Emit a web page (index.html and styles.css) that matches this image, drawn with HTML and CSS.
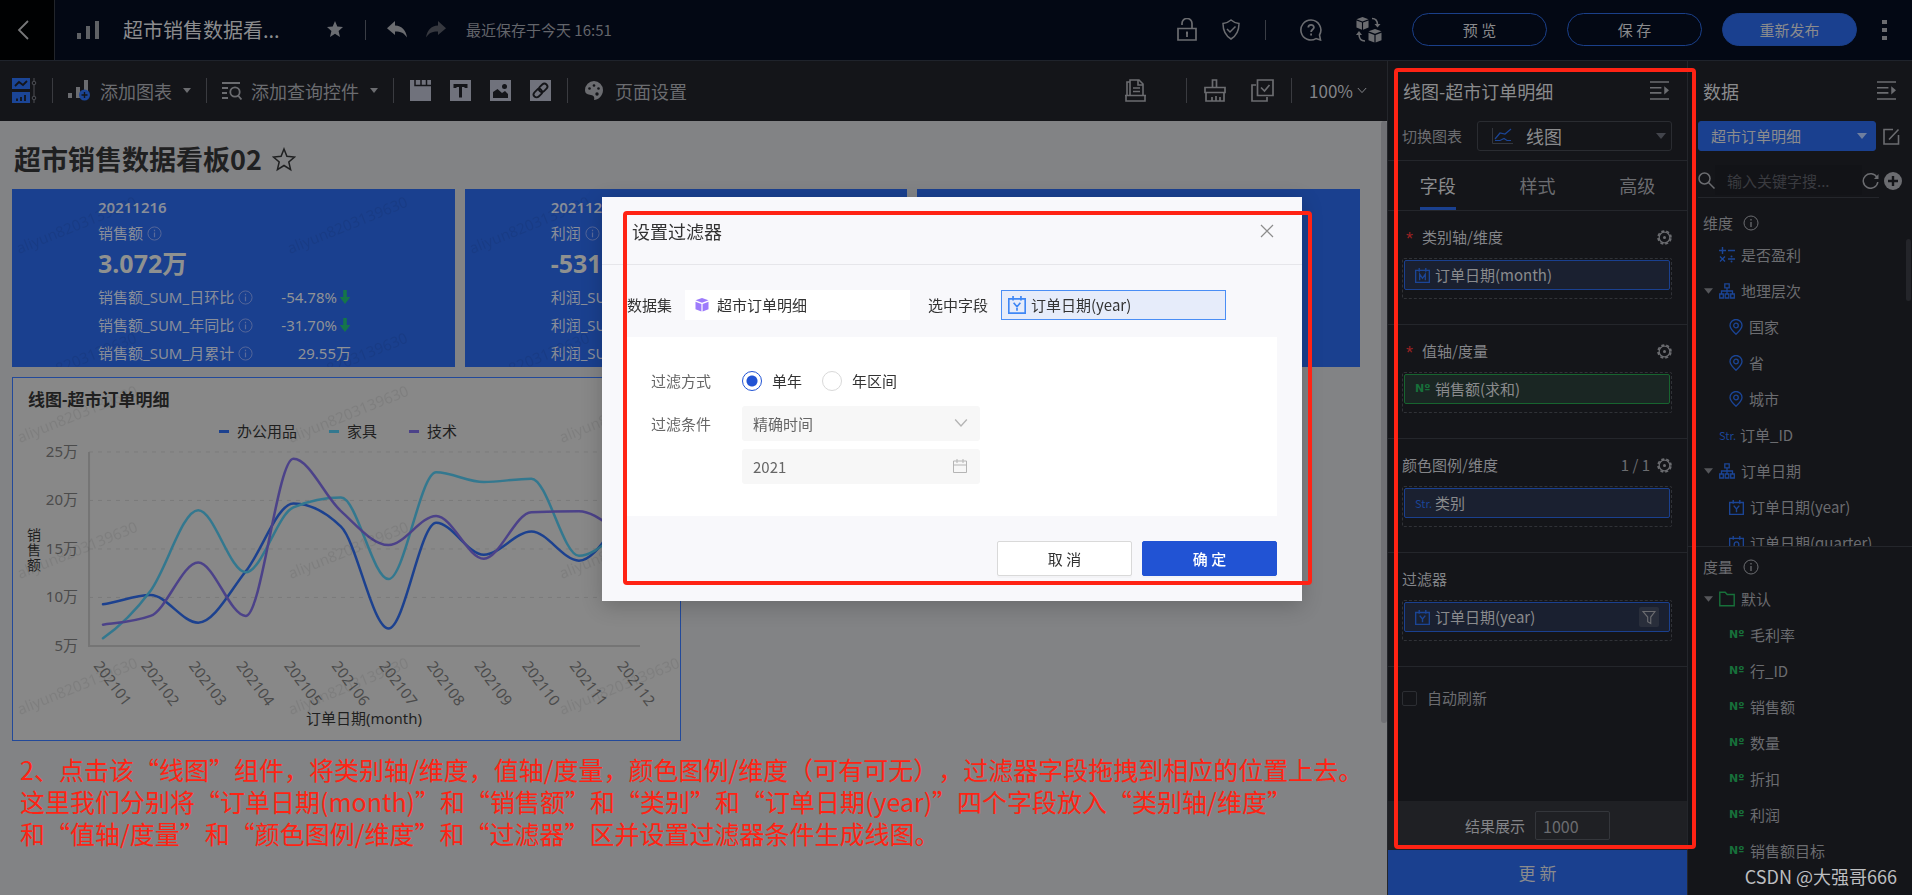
FILE: index.html
```html
<!DOCTYPE html>
<html lang="zh-CN">
<head>
<meta charset="utf-8">
<title>超市销售数据看板02</title>
<link rel="stylesheet" href="styles.css">
</head>
<body>
<svg class="sprite" aria-hidden="true">
  <symbol id="i-info" viewBox="0 0 16 16"><circle cx="8" cy="8" r="7" fill="none" stroke="currentColor"/><path d="M8 7v5M8 4v1.500" stroke="currentColor" stroke-width="1.300" fill="none"/></symbol>
  <symbol id="i-down" viewBox="0 0 12 18"><path d="M4 1h4v8h4l-6 8-6-8h4z" fill="currentColor"/></symbol>
  <symbol id="i-caret" viewBox="0 0 10 6"><path d="M0 0h10L5 6z" fill="currentColor"/></symbol>
  <symbol id="i-chev" viewBox="0 0 12 8"><path d="M1 1l5 5.500L11 1" fill="none" stroke="currentColor" stroke-width="1.200"/></symbol>
  <symbol id="i-collapse" viewBox="0 0 20 20"><path d="M0 1h20M0 7h12M0 12.500h12M0 19h20" stroke="currentColor" stroke-width="1.600" fill="none"/><path d="M15 5.500l5 4.300-5 4.300z" fill="currentColor"/></symbol>
  <symbol id="i-gear" viewBox="0 0 16 16"><circle cx="8" cy="8" r="5.700" fill="none" stroke="currentColor" stroke-width="1.400"/><circle cx="8" cy="8" r="6.900" fill="none" stroke="currentColor" stroke-width="1.800" stroke-dasharray="3.200 2.220" stroke-dashoffset="-1.100"/><circle cx="8" cy="8" r="1.600" fill="currentColor"/></symbol>
  <symbol id="i-year" viewBox="0 0 16 16"><path d="M.7 2.600h14.600v12.700H.7zM4.500 0v4M11.500 0v4M5 6l3 3.500L11 6M8 9.500V13" fill="none" stroke="currentColor" stroke-width="1.500"/></symbol>
  <symbol id="i-month" viewBox="0 0 16 16"><path d="M.7 2.600h14.600v12.700H.7zM4.500 0v4M11.500 0v4M5 13V6.500L8 11l3-4.500V13" fill="none" stroke="currentColor" stroke-width="1.400"/></symbol>
  <symbol id="i-quarter" viewBox="0 0 16 16"><path d="M.7 2.600h14.600v12.700H.7zM4.500 0v4M11.500 0v4M8.500 11l2.500 2.500" fill="none" stroke="currentColor" stroke-width="1.400"/><ellipse cx="8" cy="9.500" rx="2.500" ry="3.200" fill="none" stroke="currentColor" stroke-width="1.400"/></symbol>
  <symbol id="i-calc" viewBox="0 0 16 16"><path d="M0 3.500h7M3.500 0v7M9 3.500h7M1 9.500l5 5M6 9.500l-5 5M9 12h7" stroke="currentColor" stroke-width="1.400" fill="none"/><circle cx="12.500" cy="9.500" r="1" fill="currentColor"/><circle cx="12.500" cy="14.500" r="1" fill="currentColor"/></symbol>
  <symbol id="i-tree" viewBox="0 0 16 16"><path d="M5.800.8h4.400v4H5.800zM.7 11h3.600v4H.7zM6.200 11h3.600v4H6.200zM11.700 11h3.600v4h-3.600zM8 5v6M2.500 11V8h11v3" fill="none" stroke="currentColor" stroke-width="1.300"/></symbol>
  <symbol id="i-pin" viewBox="0 0 14 16"><path d="M7 15.200C3.500 12 1 9.500 1 6.500a6 6 0 0 1 12 0c0 3-2.500 5.500-6 8.700z" fill="none" stroke="currentColor" stroke-width="1.300"/><circle cx="7" cy="6.500" r="2.300" fill="none" stroke="currentColor" stroke-width="1.300"/></symbol>
  <symbol id="i-folder" viewBox="0 0 16 16"><path d="M.8 1.200h5.400l2 2.300h7v11.300H.8z" fill="none" stroke="currentColor" stroke-width="1.400"/></symbol>
  <symbol id="i-funnel" viewBox="0 0 16 16"><path d="M1.200 1.200h13.600L10 7.500v7.300l-3.500-2V7.500z" fill="none" stroke="currentColor" stroke-width="1.300"/></symbol>
  <symbol id="i-cal" viewBox="0 0 16 16"><path d="M1.500 3h13v11.500h-13zM1.500 7h13M5 1v4M11 1v4" fill="none" stroke="currentColor"/></symbol>
  <symbol id="i-cube" viewBox="0 0 14 14"><path d="M7 0l6.500 2.300L7 4.800.5 2.300z" fill="currentColor"/><path d="M.5 3.800l5.900 2.200v7.600L.5 11.200zM13.500 3.800L7.600 6v7.600l5.900-2.400z" fill="currentColor"/></symbol>
  <pattern id="watermark" width="271" height="136" patternUnits="userSpaceOnUse"><text class="wm-text" x="7" y="65" transform="rotate(-22 7 65)">aliyun8203139630</text></pattern>
</svg>

<header class="topbar">
  <button class="back" aria-label="返回"><svg width="12" height="20" viewBox="0 0 12 20"><path d="M11 1L2 10l9 9" fill="none" stroke="currentColor" stroke-width="1.800"/></svg></button>
  <svg class="doc-icon" width="22" height="18" viewBox="0 0 22 18"><path d="M0 12h4v6H0zM9 5h4v13H9zM18 0h4v18h-4z" fill="currentColor"/></svg>
  <h1 class="doc-title">超市销售数据看...</h1>
  <button class="icon-btn star" aria-label="收藏"><svg width="16" height="17" viewBox="0 0 16 17"><path d="M8 0l2.300 5.600 5.700.4-4.400 3.900L13 16l-5-3.300L3 16l1.400-6.100L0 6l5.700-.4z" fill="currentColor"/></svg></button>
  <span class="vline"></span>
  <button class="icon-btn undo" aria-label="撤销"><svg width="20" height="17" viewBox="0 0 20 17"><path d="M8 0v4.500c7 0 11 5 12 12-3-4.500-6-6-12-6V14L0 7.300z" fill="currentColor"/></svg></button>
  <button class="icon-btn redo" aria-label="重做"><svg width="20" height="17" viewBox="0 0 20 17"><path d="M12 0v4.500c-7 0-11 5-12 12 3-4.500 6-6 12-6V14l8-6.700z" fill="currentColor"/></svg></button>
  <span class="saved">最近保存于今天 16:51</span>
  <div class="top-right">
    <div class="top-icons">
      <button class="icon-btn" aria-label="解锁"><svg width="20" height="23" viewBox="0 0 20 23"><path d="M1 10.500h18V22H1zM5 7V5.500a5 5 0 0 1 10 0v5" fill="none" stroke="currentColor" stroke-width="1.700"/><path d="M10 13.500v5.500M9 15h2" stroke="currentColor" stroke-width="1.800"/></svg></button>
      <button class="icon-btn" aria-label="权限"><svg width="18" height="21" viewBox="0 0 18 21"><path d="M9 1c2.500 2.200 4.800 3.200 8 3.500 0 7.500-2.200 12-8 15.500C3.200 16.500 1 12 1 4.500 4.200 4.200 6.500 3.200 9 1z" fill="none" stroke="currentColor" stroke-width="1.500"/><path d="M5 10l3 3 5.500-5.500" fill="none" stroke="currentColor" stroke-width="1.500"/></svg></button>
      <span class="vline"></span>
      <button class="icon-btn help" aria-label="帮助"><svg width="22" height="22" viewBox="0 0 22 22"><path d="M11 1a10 10 0 1 0 5 18.600l4.500 1.400-1-5A10 10 0 0 0 11 1z" fill="none" stroke="currentColor" stroke-width="1.600"/><path d="M8.300 8.500c0-3.500 5.600-3.500 5.600 0 0 2-2.800 2-2.800 4.500M11.100 14.500v2" fill="none" stroke="currentColor" stroke-width="1.800"/></svg></button>
      <button class="icon-btn" aria-label="转换"><svg width="26" height="26" viewBox="0 0 26 26"><use href="#i-cube" width="13" height="13"/><use href="#i-cube" x="12" y="12" width="14" height="14"/><path d="M16 1.500c3 0 5.500 2 5.500 6.500M9 24c-4 0-6-3-6-7" fill="none" stroke="currentColor" stroke-width="1.600"/><path d="M18.500 7h6l-3 3.500zM0 18h6l-3-4z" fill="currentColor"/></svg></button>
    </div>
    <button class="pill">预 览</button>
    <button class="pill">保 存</button>
    <button class="pill primary">重新发布</button>
    <button class="icon-btn more" aria-label="更多"><svg width="5" height="20" viewBox="0 0 5 20"><path d="M0 0h5v4H0zM0 8h5v4H0zM0 16h5v4H0z" fill="currentColor"/></svg></button>
  </div>
</header>

<main class="workspace">
  <section class="editor">
    <div class="toolbar">
      <button class="icon-btn" aria-label="组件"><svg width="25" height="25" viewBox="0 0 25 25"><path d="M0 0h18v11H0zM0 14h18v11H0z" fill="#1b4596"/><path d="M3 8l4-4 4 3 4-4M5 23v-2.500M9 23v-4M13 23v-6" fill="none" stroke="#141519" stroke-width="1.800"/><path d="M22 0v3M22 7v11M22 22v3" stroke="#4d4f55"/><circle cx="22" cy="5" r="1.800" fill="none" stroke="#4d4f55"/><circle cx="22" cy="20" r="1.800" fill="none" stroke="#4d4f55"/></svg></button>
      <span class="vline tall"></span>
      <button class="tool"><svg width="23" height="21" viewBox="0 0 23 21"><path d="M0 13h4v5H0zM8 7h4v11H8zM16 0h4v12h-4z" fill="#6b6c70"/><circle cx="16.500" cy="15" r="5.500" fill="#1b4596"/><path d="M16.500 12v6M13.500 15h6" stroke="#141519" stroke-width="1.400"/></svg><span>添加图表</span><svg class="drop-arrow" width="8" height="5"><use href="#i-caret"/></svg></button>
      <span class="vline tall"></span>
      <button class="tool"><svg width="20" height="18" viewBox="0 0 20 18"><path d="M0 1h18M0 6h6M0 11h5M0 16h6" stroke="currentColor" stroke-width="1.800"/><circle cx="13" cy="10" r="4.700" fill="none" stroke="currentColor" stroke-width="1.800"/><path d="M16 13.500l3.500 4" stroke="currentColor" stroke-width="1.800"/></svg><span>添加查询控件</span><svg class="drop-arrow" width="8" height="5"><use href="#i-caret"/></svg></button>
      <span class="vline tall"></span>
      <div class="square-tools">
        <button class="icon-btn" aria-label="标签页"><svg width="21" height="21" viewBox="0 0 21 21"><path d="M0 0h21v21H0z" fill="currentColor"/><path d="M5 0v5.500h16M11 0v5.500M16.500 0v5.500" fill="none" stroke="#141519" stroke-width="1.500"/></svg></button>
        <button class="icon-btn" aria-label="文本"><svg width="21" height="21" viewBox="0 0 21 21"><path d="M0 0h21v21H0z" fill="currentColor"/><path d="M5 8V5.500h11V8M10.500 5v12.500" fill="none" stroke="#141519" stroke-width="3"/></svg></button>
        <button class="icon-btn" aria-label="图片"><svg width="21" height="21" viewBox="0 0 21 21"><path d="M0 0h21v21H0z" fill="currentColor"/><path d="M3 18v-6l4.500-3 4.500 4 3-2 3 3v4z" fill="#141519"/><circle cx="14.500" cy="6.500" r="2.500" fill="#141519"/></svg></button>
        <button class="icon-btn" aria-label="链接"><svg width="21" height="21" viewBox="0 0 21 21"><path d="M0 0h21v21H0z" fill="currentColor"/><g fill="none" stroke="#141519" stroke-width="1.800" transform="rotate(-45 10.500 10.500)"><rect x="2" y="7.500" width="9.500" height="6" rx="3"/><rect x="9.500" y="7.500" width="9.500" height="6" rx="3"/></g></svg></button>
      </div>
      <span class="vline tall"></span>
      <button class="tool page-set"><svg width="18" height="19" viewBox="0 0 18 19"><path d="M9 0a9 9 0 0 1 9 9c0 6-5 10-9 10 1-3-.5-4.500-3-5-3-.4-6-1-6-5a9 9 0 0 1 9-9z" fill="currentColor"/><g fill="#141519"><circle cx="4.500" cy="7.500" r="1.300"/><circle cx="9" cy="4.500" r="1.300"/><circle cx="13.500" cy="7.500" r="1.300"/><circle cx="12" cy="13" r="1.700"/></g></svg><span>页面设置</span></button>
      <div class="tool-right">
        <button class="icon-btn" aria-label="报告"><svg width="23" height="23" viewBox="0 0 23 23"><path d="M3 16V3h3V1h9l4 4v11M6 3v13M14 1v5h5M9 9h7M9 12.500h7M1 16.500h21M2 17v5h19v-5" fill="none" stroke="currentColor" stroke-width="1.600"/></svg></button>
        <span class="vline tall"></span>
        <button class="icon-btn" aria-label="格式刷"><svg width="22" height="23" viewBox="0 0 22 23"><path d="M8.500 8V1h4v7M1 8.500h20v5H1zM2 13.500V22h18v-8.500M8 22v-4M12 22v-5M16 22v-4" fill="none" stroke="currentColor" stroke-width="1.700"/></svg></button>
        <button class="icon-btn" aria-label="批量选择"><svg width="23" height="23" viewBox="0 0 23 23"><path d="M6.500 1H22v15.500H6.500zM5 6H1v16h15v-4" fill="none" stroke="currentColor" stroke-width="1.700"/><path d="M10 8.500l3.500 3.500 5-6" fill="none" stroke="currentColor" stroke-width="1.700"/></svg></button>
        <span class="vline tall"></span>
        <button class="zoom">100%<svg width="10" height="7"><use href="#i-chev"/></svg></button>
      </div>
    </div>

    <div class="canvas">
      <div class="board-title"><h2>超市销售数据看板02</h2><svg width="24" height="25" viewBox="0 0 24 25"><path d="M12 2l2.900 7.300 7.600.7-5.700 5 1.800 7.700L12 18.500l-6.600 4.200L7.200 15 1.500 10l7.600-.7z" fill="none" stroke="currentColor" stroke-width="1.500"/></svg></div>
      <div class="board">
        <article class="kpi">
          <div class="kpi-date">20211216</div>
          <div class="kpi-name">销售额<svg width="15" height="15"><use href="#i-info"/></svg></div>
          <div class="kpi-value">3.072万</div>
          <div class="kpi-row"><span>销售额_SUM_日环比<svg width="15" height="15"><use href="#i-info"/></svg></span><span>-54.78%<svg class="drop" width="12" height="16"><use href="#i-down"/></svg></span></div>
          <div class="kpi-row"><span>销售额_SUM_年同比<svg width="15" height="15"><use href="#i-info"/></svg></span><span>-31.70%<svg class="drop" width="12" height="16"><use href="#i-down"/></svg></span></div>
          <div class="kpi-row last"><span>销售额_SUM_月累计<svg width="15" height="15"><use href="#i-info"/></svg></span><span>29.55万</span></div>
          <svg class="wm" aria-hidden="true"><rect width="100%" height="100%" fill="url(#watermark)"/></svg>
        </article>
        <article class="kpi">
          <div class="kpi-date">20211216</div>
          <div class="kpi-name">利润<svg width="15" height="15"><use href="#i-info"/></svg></div>
          <div class="kpi-value">-531</div>
          <div class="kpi-row"><span>利润_SUM_日环比</span></div>
          <div class="kpi-row"><span>利润_SUM_年同比</span></div>
          <div class="kpi-row last"><span>利润_SUM_月累计</span></div>
          <svg class="wm" aria-hidden="true"><rect width="100%" height="100%" fill="url(#watermark)"/></svg>
        </article>
        <article class="kpi"></article>
        <article class="chart-card">
          <h3>线图-超市订单明细</h3>
          <svg id="chart" class="chart" viewBox="0 0 667 328" role="img" aria-label="线图-超市订单明细"></svg>
          <svg class="wm" aria-hidden="true"><rect width="100%" height="100%" fill="url(#watermark)"/></svg>
        </article>
      </div>
      <p class="note">2、点击该“线图”组件，将类别轴/维度，值轴/度量，颜色图例/维度（可有可无），过滤器字段拖拽到相应的位置上去。<br>这里我们分别将“订单日期(month)”和“销售额”和“类别”和“订单日期(year)”四个字段放入“类别轴/维度”<br>和“值轴/度量”和“颜色图例/维度”和“过滤器”区并设置过滤器条件生成线图。</p>
      <span class="canvas-scroll"></span>
    </div>
  </section>

  <aside class="panel">
    <div class="panel-head"><h2>线图-超市订单明细</h2><button class="icon-btn" aria-label="收起"><svg width="19" height="19"><use href="#i-collapse"/></svg></button></div>
    <div class="switch">
      <label for="chart-type">切换图表</label>
      <div class="select type-select"><svg class="lead" width="21" height="16" viewBox="0 0 21 16"><path d="M.5 0v15.500H21" fill="none" stroke="#33363d"/><path d="M3 11l5-6 5 1 6-5M3 12.500h5l4-2 3 2h4" fill="none" stroke="#1b4596" stroke-width="1.200"/></svg><select id="chart-type"><option>线图</option></select><svg class="arrow" width="10" height="6"><use href="#i-caret"/></svg></div>
    </div>
    <nav class="tabs"><button class="active">字段</button><button>样式</button><button>高级</button></nav>
    <section class="field">
      <div class="field-head"><i class="req">*</i><span>类别轴/维度</span><svg class="gear" width="15" height="15"><use href="#i-gear"/></svg></div>
      <div class="dropzone"><div class="chip"><svg width="15" height="15"><use href="#i-month"/></svg>订单日期(month)</div></div>
    </section>
    <section class="field">
      <div class="field-head"><i class="req">*</i><span>值轴/度量</span><svg class="gear" width="15" height="15"><use href="#i-gear"/></svg></div>
      <div class="dropzone"><div class="chip green"><b class="tag num">Nº</b>销售额(求和)</div></div>
    </section>
    <section class="field">
      <div class="field-head"><span>颜色图例/维度</span><em>1 / 1</em><svg class="gear" width="15" height="15"><use href="#i-gear"/></svg></div>
      <div class="dropzone"><div class="chip"><b class="tag">Str.</b>类别</div></div>
    </section>
    <section class="field">
      <div class="field-head"><span>过滤器</span></div>
      <div class="dropzone"><div class="chip"><svg width="15" height="15"><use href="#i-year"/></svg>订单日期(year)<button class="filter" aria-label="过滤"><svg width="14" height="15"><use href="#i-funnel"/></svg></button></div></div>
    </section>
    <label class="auto"><input type="checkbox">自动刷新</label>
    <div class="limit"><label for="limit">结果展示</label><input id="limit" type="text" value="1000"></div>
    <button class="update">更 新</button>
    <span class="mark mark-panel"></span>
  </aside>

  <aside class="data">
    <div class="panel-head"><h2>数据</h2><button class="icon-btn" aria-label="收起"><svg width="19" height="19"><use href="#i-collapse"/></svg></button></div>
    <div class="dataset">
      <div class="select blue"><select aria-label="数据集"><option>超市订单明细</option></select><svg class="arrow" width="10" height="6"><use href="#i-caret"/></svg></div>
      <button class="icon-btn" aria-label="编辑"><svg width="17" height="17" viewBox="0 0 17 17"><path d="M10 1.500H1v14.500h14.500V7M6 11.500L15.500 1.500" fill="none" stroke="currentColor" stroke-width="1.600"/></svg></button>
    </div>
    <div class="search-row">
      <div class="search"><svg width="17" height="17" viewBox="0 0 17 17"><circle cx="6.500" cy="6.500" r="5.500" fill="none" stroke="currentColor" stroke-width="1.500"/><path d="M10.500 10.500l6 6" stroke="currentColor" stroke-width="1.500"/></svg><input type="text" placeholder="输入关键字搜..." aria-label="搜索"><svg width="17" height="17" viewBox="0 0 17 17"><path d="M15 5.500A7.300 7.300 0 1 0 15.800 10" fill="none" stroke="currentColor" stroke-width="1.500"/><path d="M16.500 2v5h-4.500z" fill="currentColor"/></svg></div>
      <button class="icon-btn" aria-label="新增"><svg width="18" height="18" viewBox="0 0 18 18"><circle cx="9" cy="9" r="9" fill="currentColor"/><path d="M9 4v10M4 9h10" stroke="#141519" stroke-width="2.400"/></svg></button>
    </div>
    <section class="group dims">
      <h3>维度<svg width="16" height="16"><use href="#i-info"/></svg></h3>
      <ul>
        <li class="l1"><svg width="16" height="16"><use href="#i-calc"/></svg>是否盈利</li>
        <li class="l1 open"><svg class="fold" width="9" height="6"><use href="#i-caret"/></svg><svg width="16" height="16"><use href="#i-tree"/></svg>地理层次</li>
        <li class="l2"><svg width="14" height="16"><use href="#i-pin"/></svg>国家</li>
        <li class="l2"><svg width="14" height="16"><use href="#i-pin"/></svg>省</li>
        <li class="l2"><svg width="14" height="16"><use href="#i-pin"/></svg>城市</li>
        <li class="l1"><b class="tag">Str.</b>订单_ID</li>
        <li class="l1 open"><svg class="fold" width="9" height="6"><use href="#i-caret"/></svg><svg width="16" height="16"><use href="#i-tree"/></svg>订单日期</li>
        <li class="l2"><svg width="15" height="15"><use href="#i-year"/></svg>订单日期(year)</li>
        <li class="l2"><svg width="15" height="15"><use href="#i-quarter"/></svg>订单日期(quarter)</li>
      </ul>
      <span class="list-scroll"></span>
    </section>
    <section class="group measures">
      <h3>度量<svg width="16" height="16"><use href="#i-info"/></svg></h3>
      <ul>
        <li class="l1 open"><svg class="fold" width="9" height="6"><use href="#i-caret"/></svg><svg width="16" height="16"><use href="#i-folder"/></svg>默认</li>
        <li class="l2"><b class="tag num">Nº</b>毛利率</li>
        <li class="l2"><b class="tag num">Nº</b>行_ID</li>
        <li class="l2"><b class="tag num">Nº</b>销售额</li>
        <li class="l2"><b class="tag num">Nº</b>数量</li>
        <li class="l2"><b class="tag num">Nº</b>折扣</li>
        <li class="l2"><b class="tag num">Nº</b>利润</li>
        <li class="l2"><b class="tag num">Nº</b>销售额目标</li>
      </ul>
    </section>
    <span class="credit">CSDN @大强哥666</span>
  </aside>
</main>

<div class="backdrop">
  <div class="modal" role="dialog" aria-labelledby="dlg-title">
    <div class="modal-head"><h2 id="dlg-title">设置过滤器</h2><button class="icon-btn" aria-label="关闭"><svg width="14" height="14" viewBox="0 0 14 14"><path d="M1 1l12 12M13 1L1 13" stroke="currentColor" stroke-width="1.200"/></svg></button></div>
    <div class="modal-body">
      <div class="pair">
        <span>数据集</span><div class="box"><svg class="violet" width="14" height="14"><use href="#i-cube"/></svg>超市订单明细</div>
        <span class="second">选中字段</span><div class="box picked"><svg width="18" height="18"><use href="#i-year"/></svg>订单日期(year)</div>
      </div>
      <form class="form">
        <span class="form-label">过滤方式</span>
        <div class="radios">
          <label><input type="radio" name="mode" checked>单年</label>
          <label><input type="radio" name="mode">年区间</label>
        </div>
        <label class="form-label" for="cond">过滤条件</label>
        <div class="control"><select id="cond"><option>精确时间</option></select><svg width="14" height="10"><use href="#i-chev"/></svg></div>
        <div class="control year"><input type="text" value="2021" aria-label="年份"><svg width="16" height="16"><use href="#i-cal"/></svg></div>
      </form>
      <div class="actions"><button class="btn">取 消</button><button class="btn ok">确 定</button></div>
    </div>
    <span class="mark mark-modal"></span>
  </div>
</div>
<script src="chart.js"></script>
</body>
</html>
```
FILE: styles.css
```css
* { box-sizing: border-box; }
body {
  margin: 0;
  height: 100vh;
  display: flex;
  flex-direction: column;
  overflow: hidden;
  background: #141519;
  color: #838488;
  font: 15px/24px "Noto Sans CJK SC", "Noto Sans", sans-serif;
}
h1, h2, h3, p, ul { margin: 0; padding: 0; font-weight: 400; }
ul { list-style: none; }
button, input, select { font: inherit; color: inherit; margin: 0; }
button { background: none; border: 0; padding: 0; }
svg { flex: none; display: block; }
.sprite { position: absolute; width: 0; height: 0; }
.icon-btn { display: flex; flex: none; color: #6b6c70; }
.vline { width: 1px; height: 20px; flex: none; background: #3a3d45; }
.vline.tall { height: 25px; background: #3a3b40; }

/* Top bar */
.topbar {
  display: flex;
  align-items: center;
  flex: none;
  height: 61px;
  padding-bottom: 1px;
  background: #030814;
  border-bottom: 1px solid #1f232b;
}
.back {
  display: flex;
  align-items: center;
  align-self: flex-start;
  width: 55px;
  height: 60px;
  padding-left: 17px;
  background: #000102;
  border-right: 1px solid #22252b;
  color: #77787a;
}
.doc-icon { margin: 0 24px 0 22px; color: #5f6165; }
.doc-title { width: 204px; font-size: 20px; color: #8b8c8e; }
.star { margin-right: 22px; color: #6b6d72; }
.undo { margin: 0 19px 0 21px; }
.redo { margin-right: 20px; color: #36383f; }
.saved { color: #63656b; }
.top-right { display: flex; align-items: center; gap: 20px; margin-left: auto; padding-right: 25px; }
.top-icons { display: flex; align-items: center; gap: 25px; margin-right: 10px; }
.top-icons .help { margin: 0 9px; }
.pill {
  width: 135px;
  height: 33px;
  border: 1px solid #1a3f89;
  border-radius: 17px;
  color: #8a8b8d;
}
.pill.primary { background: #1a408f; }
.more { margin-left: 5px; }

/* Workspace */
.workspace { display: flex; flex: 1; min-height: 0; }
.editor { display: flex; flex-direction: column; flex: 1; min-width: 0; }
.toolbar {
  display: flex;
  align-items: center;
  gap: 15px;
  flex: none;
  height: 60px;
  padding: 0 20px 1px 12px;
  color: #6b6c70;
  font-size: 18px;
}
.tool { display: flex; align-items: center; gap: 9px; }
.drop-arrow { margin-left: 2px; }
.page-set { gap: 12px; margin-left: 2px; }
.square-tools { display: flex; gap: 19px; margin: 0 1px; }
.square-tools .icon-btn { color: #70727c; }
.tool-right { display: flex; align-items: center; gap: 17px; margin-left: auto; }
.tool-right .vline:first-of-type { margin-left: 22px; }
.tool-right .icon-btn + .icon-btn { margin-left: 8px; }
.zoom { display: flex; align-items: center; gap: 4px; font-size: 17px; color: #838488; }

.canvas { position: relative; flex: 1; min-height: 0; padding: 20px 27px 0 12px; overflow: hidden; background: #828385; }
.board-title { display: flex; align-items: center; gap: 10px; height: 36px; margin-bottom: 12px; padding-left: 2px; color: #1f2021; }
.board-title h2 { font-size: 27px; font-weight: 700; }
.board { display: grid; grid-template-columns: repeat(6, 1fr); gap: 10px; }
.kpi, .chart-card { position: relative; font-family: "Noto Sans", "Noto Sans CJK SC", sans-serif; overflow: hidden; }
.kpi { grid-column: span 2; padding: 6px 0 0 86px; background: #1a408f; color: #898e99; }
.kpi-date { font-weight: 600; line-height: 24px; }
.kpi-name, .kpi-row span { display: flex; align-items: center; gap: 4px; line-height: 28px; }
.kpi-name svg, .kpi-row svg { color: #58699a; }
.kpi-value { margin-bottom: 4px; font-size: 25px; font-weight: 700; line-height: 32px; color: #8f9190; }
.kpi-row { display: flex; align-items: flex-start; justify-content: space-between; width: 253px; height: 28px; }
.kpi-row span + span { gap: 2px; color: #8f9296; }
.kpi-row .drop { color: #15754a; }
.kpi-row.last { height: 22px; margin-bottom: 6px; overflow: hidden; }
.chart-card { grid-column: span 3; border: 1px solid #22499a; background: #888; }
.chart-card h3 { padding: 10px 15px 0; font-size: 17px; font-weight: 600; color: #1f1f1f; }
.chart { width: 100%; font-size: 15px; }
.wm { position: absolute; inset: 0; width: 100%; height: 100%; pointer-events: none; }
.wm-text { font: 15px "Noto Sans", sans-serif; fill: #000; fill-opacity: .07; }
.grid-line { stroke: #7b7b7b; stroke-dasharray: 4 5; }
.axis-line { fill: none; stroke: #757575; stroke-width: 2; }
.tick { fill: #4b4b4b; }
.name { fill: #1f1f1f; }
.name.upright { font-size: 14px; }
.series { fill: none; stroke-width: 2.5; stroke-linecap: round; }
.note { padding: 12px 0 0 8px; font-size: 25px; line-height: 32px; white-space: nowrap; text-spacing-trim: space-all; color: #ff2314; }
.canvas-scroll { position: absolute; top: 0; right: 0; width: 6px; height: 602px; border-radius: 3px; background: #707175; }

/* Red frames laid over the interface */
.mark { position: absolute; z-index: 5; border: 4px solid #ff2314; border-radius: 4px; pointer-events: none; }
.mark-panel { top: 7px; left: 6px; right: -9px; bottom: 46px; }
.mark-modal { top: 14px; left: 21px; right: -10px; bottom: 16px; }

/* Chart settings */
.panel { position: relative; display: flex; flex-direction: column; flex: none; width: 300px; border-left: 1px solid #24262b; }
.panel-head { display: flex; align-items: center; justify-content: space-between; flex: none; height: 60px; padding: 0 18px 1px 15px; }
.panel-head h2 { font-size: 18px; color: #8a8b8d; }
.switch { display: flex; align-items: center; justify-content: space-between; padding: 0 15px 9px 14px; border-bottom: 1px solid #24262b; color: #6b6c70; }
.select { position: relative; }
.select select { width: 100%; height: 30px; padding: 0 12px; border: 1px solid #2a2c31; border-radius: 3px; background: none; appearance: none; color: #8a8b8d; }
.select .arrow { position: absolute; right: 9px; top: 12px; color: #42444b; pointer-events: none; }
.type-select { width: 195px; }
.type-select select { padding-left: 48px; font-size: 18px; }
.type-select .arrow { right: 6px; }
.type-select .lead { position: absolute; left: 15px; top: 7px; }
.tabs { display: grid; grid-template-columns: repeat(3, 1fr); flex: none; height: 50px; border-bottom: 1px solid #24262b; font-size: 18px; }
.tabs button { justify-self: center; height: 49px; padding-top: 2px; border-bottom: 3px solid transparent; color: #6b6c70; }
.tabs .active { border-color: #1a408f; color: #8a8b8d; }
.field { flex: none; padding: 14px 15px 25px 14px; border-bottom: 1px solid #24262b; }
.field-head { display: flex; align-items: center; gap: 7px; height: 24px; margin-bottom: 9px; color: #838488; }
.field-head em { margin-left: auto; font-style: normal; color: #6b6c70; }
.field-head .gear { margin-left: auto; color: #6b6c70; }
.field-head em + .gear { margin-left: 0; }
.req { width: 13px; padding: 3px 0 0 4px; font: 18px/24px "Liberation Sans", sans-serif; color: #9c2122; }
.dropzone { padding: 1px 1px 8px; border: 1px dashed #303237; border-radius: 2px; }
.chip { display: flex; align-items: center; gap: 5px; height: 30px; padding: 0 10px; border: 1px solid #1a408f; border-radius: 2px; background: #1a2030; color: #8a8b8d; }
.chip svg { color: #1b4596; }
.chip.green { border-color: #17642f; background: #1a2623; }
.tag { width: 15px; flex: none; font-size: 11px; font-weight: 400; color: #1b4596; white-space: nowrap; }
.tag.num { font: 700 11px/24px "DejaVu Sans", sans-serif; color: #17703a; }
.filter { display: grid; place-items: center; width: 20px; height: 20px; margin-left: auto; border-radius: 2px; background: #292e3b; }
.filter svg { color: #6b6c70; }
.auto { display: flex; align-items: center; gap: 10px; margin: 19px 14px auto; color: #6b6c70; }
.auto input { appearance: none; width: 15px; height: 15px; border: 1px solid #2c2e33; border-radius: 2px; }
.limit { display: flex; align-items: center; justify-content: center; gap: 10px; height: 49px; background: #1f2024; color: #838488; }
.limit input { width: 75px; height: 29px; padding: 0 7px; border: 1px solid #34363b; border-radius: 2px; background: none; font-size: 16px; color: #6b6c70; }
.update { flex: none; height: 45px; background: #1a408f; color: #8a8b8d; font-size: 17px; }

/* Data panel */
.data { position: relative; display: flex; flex-direction: column; flex: none; width: 225px; border-left: 1px solid #24262b; }
.data .panel-head { padding-right: 16px; }
.dataset { display: flex; align-items: center; gap: 7px; flex: none; padding: 0 12px 0 10px; }
.dataset .select { flex: 1; }
.blue select { border-color: #1a408f; background: #1a408f; }
.blue .arrow { color: #6f7f9f; }
.search-row { display: flex; align-items: center; gap: 5px; flex: none; margin-top: 12px; padding: 0 10px; color: #6b6c70; }
.search { display: flex; align-items: center; flex: 1; min-width: 0; height: 35px; border-bottom: 1px solid #24262b; }
.search input { flex: 1; min-width: 0; height: 30px; padding: 0 12px; border: 0; background: #121317; }
.search input::placeholder { color: #3a3b40; opacity: 1; }
.group { position: relative; flex: 1 1 0; min-height: 0; overflow: hidden; color: #6b6c70; }
.group h3 { display: flex; align-items: center; gap: 10px; height: 24px; margin: 13px 0 2px; padding-left: 15px; font-size: 15px; }
.measures { border-top: 1px solid #24262b; }
.measures h3 { margin-top: 8px; }
.group li { display: flex; align-items: center; gap: 6px; height: 36px; }
.group li svg { color: #1b4596; }
.l1 { padding-left: 31px; }
.l1.open { padding-left: 16px; }
.l2 { padding-left: 41px; }
.group .fold { color: #55565a; }
.measures li svg:last-of-type { color: #17703a; }
.list-scroll { position: absolute; top: 41px; right: 1px; width: 5px; height: 62px; border-radius: 3px; background: #24252a; }
.credit { position: absolute; right: 15px; bottom: 7px; font-size: 18px; color: #bdbec0; }

/* Filter dialog */
.backdrop { position: fixed; inset: 0; display: flex; justify-content: center; align-items: flex-start; padding: 197px 8px 0 0; }
.modal { position: relative; width: 700px; background: #f8f8fb; box-shadow: 0 5px 20px rgba(0, 0, 0, .2); color: #333; }
.modal-head { display: flex; align-items: center; justify-content: space-between; height: 68px; padding: 0 28px 0 30px; border-bottom: 1px solid #e6e6ea; }
.modal-head h2 { font-size: 18px; color: #333; }
.modal-head .icon-btn { color: #8c8c8c; }
.modal-body { padding: 25px; }
.pair { display: flex; align-items: center; margin-bottom: 17px; }
.box { display: flex; align-items: center; gap: 8px; width: 225px; height: 30px; margin-left: 13px; padding: 0 10px; background: #fff; }
.box.picked { gap: 5px; padding: 0 6px; border: 1px solid #4a8ef5; background: #e6ecfa; }
.picked svg { color: #3f87f5; }
.violet { color: #9d7bfb; }
.second { margin-left: 18px; }
.form { display: grid; grid-template-columns: 91px 238px; gap: 8px 0; align-items: center; padding: 26px 24px 32px; background: #fff; }
.form-label { color: #666; }
.radios { display: flex; gap: 20px; height: 35px; }
.radios label { display: flex; align-items: center; gap: 10px; }
.radios input { appearance: none; width: 20px; height: 20px; border: 1px solid #d9d9d9; border-radius: 50%; }
.radios input:checked { border-color: #2153d4; background: radial-gradient(circle, #2153d4 5px, #fff 6px); }
.control { position: relative; display: flex; }
.control select, .control input { width: 100%; height: 35px; padding: 0 11px; border: 0; border-radius: 3px; background: #f7f7f7; color: #666; appearance: none; }
.control svg { position: absolute; right: 12px; top: 12px; color: #b5b5b5; pointer-events: none; }
.control.year { grid-column: 2; }
.control.year svg { top: 9px; }
.actions { display: flex; justify-content: flex-end; gap: 10px; margin-top: 25px; }
.btn { width: 135px; height: 35px; border: 1px solid #d9d9d9; border-radius: 2px; background: #fff; box-shadow: 0 2px 0 rgba(0, 0, 0, .02); }
.btn.ok { border-color: #2153d4; background: #2153d4; color: #fff; font-weight: 500; }
```
FILE: chart.js
```js
const NS = "http://www.w3.org/2000/svg";
const chart = document.getElementById("chart");
const area = { left: 76, right: 627, top: 40, bottom: 234, first: 90, step: 47.6 };
const series = [
  { name: "办公用品", color: "#1c418f", at: 206, data: [9.3, 10.25, 7.4, 12.7, 19.7, 17.3, 6.8, 17.7, 14.4, 16.8, 13.8, 18.7] },
  { name: "家具", color: "#33788f", at: 316, data: [5.8, 10.7, 19, 12.6, 19.3, 20.3, 11.9, 22.9, 21.9, 22.25, 14.3, 17.2] },
  { name: "技术", color: "#4c4289", at: 396, data: [7.2, 8.1, 13.6, 8.1, 24.3, 18.9, 15.4, 18.4, 14, 18.8, 18.9, 16.3] }
];

function add(tag, attrs, text) {
  const el = document.createElementNS(NS, tag);
  for (const key in attrs) el.setAttribute(key, attrs[key]);
  if (text) el.textContent = text;
  chart.appendChild(el);
}
const px = i => area.first + i * area.step;
const py = v => area.bottom - (v - 5) * (area.bottom - area.top) / 20;

// Monotone cubic interpolation: no overshoot beyond the data points
function curve(values) {
  const pts = values.map((v, i) => [px(i), py(v)]);
  const n = pts.length;
  const d = pts.slice(1).map((p, i) => (p[1] - pts[i][1]) / area.step);
  const m = pts.map((p, i) => {
    if (i === 0) return d[0] * 0.7;
    if (i === n - 1) return d[n - 2];
    if (d[i - 1] * d[i] <= 0) return 0;
    return Math.sign(d[i]) * Math.min(Math.abs(d[i - 1]), Math.abs(d[i]), Math.abs(d[i - 1] + d[i]) / 4) * 2;
  });
  let path = "M" + pts[0];
  const h = area.step / 3;
  for (let i = 0; i < n - 1; i++) {
    const [a, b] = [pts[i], pts[i + 1]];
    path += `C${a[0] + h},${a[1] + m[i] * h} ${b[0] - h},${b[1] - m[i + 1] * h} ${b}`;
  }
  return path;
}

for (let v = 5; v <= 25; v += 5) {
  if (v > 5) add("line", { class: "grid-line", x1: area.left, x2: area.right, y1: py(v), y2: py(v) });
  add("text", { class: "tick", x: 65, y: py(v) + 5, "text-anchor": "end" }, v + "万");
}
add("path", { class: "axis-line", d: `M${area.left},${area.top}V${area.bottom}H${area.right}` });
for (let i = 0; i < 12; i++) {
  const x = px(i) - 10;
  add("text", { class: "tick", x: x, y: 254, transform: `rotate(53 ${x} 254)` }, String(202101 + i));
}
[..."销售额"].forEach((c, i) => add("text", { class: "name upright", x: 21, y: 128 + i * 15, "text-anchor": "middle" }, c));
add("text", { class: "name", x: 351, y: 312, "text-anchor": "middle" }, "订单日期(month)");
for (const s of series) {
  add("rect", { x: s.at, y: 18, width: 10, height: 3, fill: s.color });
  add("text", { class: "name", x: s.at + 18, y: 25 }, s.name);
  add("path", { class: "series", stroke: s.color, d: curve(s.data) });
}
```
